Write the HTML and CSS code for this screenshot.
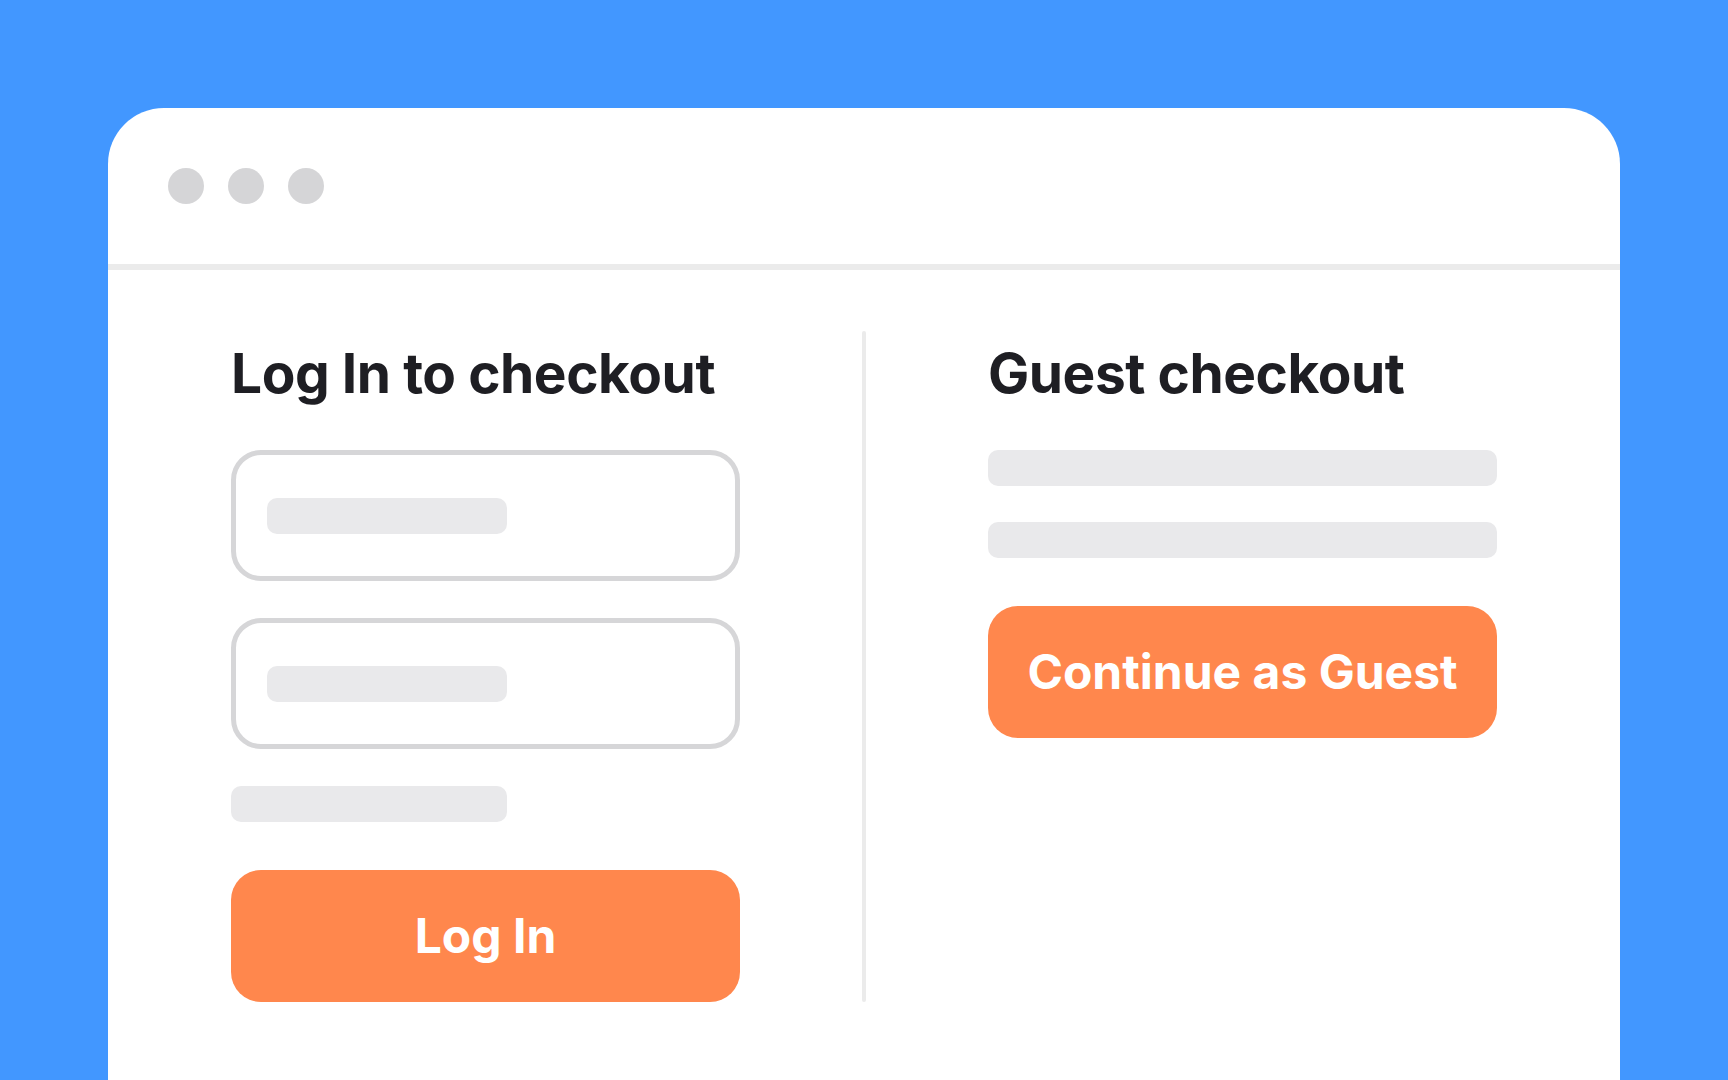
FILE: index.html
```html
<!DOCTYPE html>
<html lang="en">
<head>
<meta charset="utf-8">
<title>Checkout</title>
<link rel="stylesheet" href="styles.css">
</head>
<body>
<div class="window">
  <div class="titlebar">
    <span class="dot"></span><span class="dot"></span><span class="dot"></span>
  </div>
  <div class="content">
    <section class="col">
      <h1 class="title">Log In to checkout</h1>
      <div class="field"><span class="ph"></span></div>
      <div class="field gap"><span class="ph"></span></div>
      <div class="bar short"></div>
      <button class="btn">Log In</button>
    </section>
    <div class="divider"></div>
    <section class="col">
      <h1 class="title">Guest checkout</h1>
      <div class="bar"></div>
      <div class="bar second"></div>
      <button class="btn">Continue as Guest</button>
    </section>
  </div>
</div>
</body>
</html>
```
FILE: styles.css
```css
html, body {
  margin: 0;
  padding: 0;
}
body {
  background: #4297ff;
  font-family: Inter, "Noto Sans", sans-serif;
  height: 1080px;
  overflow: hidden;
}
.window {
  margin: 108px 0 0 108px;
  width: 1512px;
  height: 972px;
  background: #ffffff;
  border-radius: 56px 56px 0 0;
}
.titlebar {
  height: 162px;
  border-bottom: 6px solid #ebebeb;
  display: flex;
  align-items: center;
  gap: 24px;
  padding-left: 60px;
  box-sizing: border-box;
}
.dot {
  width: 36px;
  height: 36px;
  border-radius: 50%;
  background: #d5d5d7;
}
.content {
  display: flex;
  padding: 61px 123px 0 123px;
}
.col {
  width: 509px;
  display: flex;
  flex-direction: column;
  align-items: flex-start;
}
.divider {
  width: 4px;
  background: #ebebeb;
  margin: 0 122px;
  border-radius: 2px;
}
.title {
  margin: 15px 0 50px 0;
  font-size: 55px;
  line-height: 54px;
  font-weight: 700;
  color: #1e1e23;
  letter-spacing: -0.45px;
}
.field {
  width: 509px;
  height: 131px;
  box-sizing: border-box;
  border: 5px solid #d6d6d8;
  border-radius: 30px;
  display: flex;
  align-items: center;
  padding-left: 31px;
}
.field.gap {
  margin-top: 37px;
}
.ph {
  width: 240px;
  height: 36px;
  border-radius: 10px;
  background: #e9e9eb;
}
.bar {
  width: 509px;
  height: 36px;
  border-radius: 10px;
  background: #e9e9eb;
}
.bar.short {
  width: 276px;
  margin-top: 37px;
}
.bar.second {
  margin-top: 36px;
}
.btn {
  margin-top: 48px;
  width: 509px;
  height: 132px;
  border: none;
  border-radius: 30px;
  background: #ff874d;
  color: #ffffff;
  font-family: Inter, "Noto Sans", sans-serif;
  font-size: 48px;
  line-height: 48px;
  font-weight: 700;
  padding: 0;
  display: flex;
  align-items: center;
  justify-content: center;
}
```
